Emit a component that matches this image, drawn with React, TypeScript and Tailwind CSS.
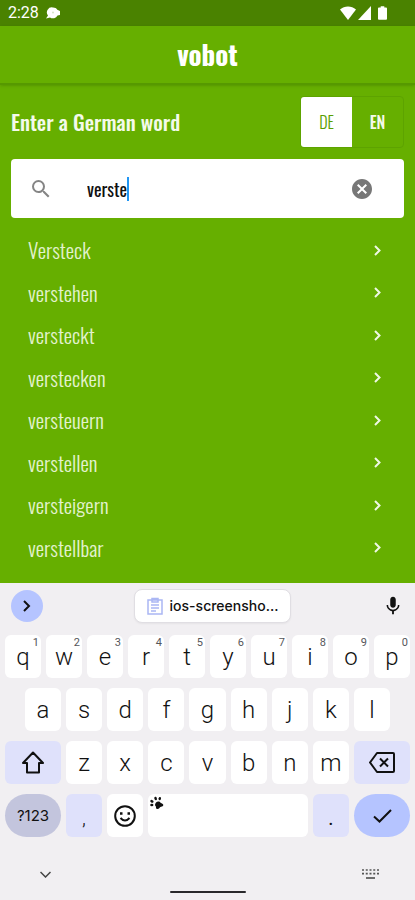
import React, { useState } from "react";
import { clsx } from "clsx";
import { MdCancel, MdMic, MdSearch } from "react-icons/md";

const suggestions = [
  "Versteck",
  "verstehen",
  "versteckt",
  "verstecken",
  "versteuern",
  "verstellen",
  "versteigern",
  "verstellbar",
];

const topRow = ["q", "w", "e", "r", "t", "y", "u", "i", "o", "p"];
const middleRow = ["a", "s", "d", "f", "g", "h", "j", "k", "l"];
const bottomRow = ["z", "x", "c", "v", "b", "n", "m"];

const narrow = "font-['Oswald','Liberation_Sans_Narrow','Roboto_Condensed',sans-serif]";

function StatusBar() {
  return (
    <div className="flex h-[26px] items-center justify-between bg-[#4a8200] pl-2 pr-7 text-white">
      <div className="flex items-center gap-[6px]">
        <span className="text-base">2:28</span>
        <svg className="h-3 w-4" viewBox="0 0 16 12" fill="currentColor">
          <path d="M1 11.500 3 8.500A5 5 0 0 1 8 .5c2 0 3.500.8 4.300 2.300L15 4v4l-2.500.5A5.200 5.200 0 0 1 5 10.500Z" />
          <circle cx="8" cy="5.500" r="1" fill="#d5e2c6" />
        </svg>
      </div>
      <div className="flex items-center">
        <svg className="h-[14px] w-4" viewBox="0 0 16 14" fill="currentColor">
          <path d="M0 3.600C4.500-.4 11.500-.4 16 3.600L8 14Z" />
        </svg>
        <svg className="ml-0.5 h-[14px] w-[13px]" viewBox="0 0 13 14" fill="currentColor">
          <path d="M13 0v14H0Z" />
        </svg>
        <svg className="ml-[7px] h-[14px] w-[9px]" viewBox="0 0 10 15" fill="currentColor">
          <path d="M3 0h4v1.500h2q1 0 1 1V14q0 1-1 1H1q-1 0-1-1V2.500q0-1 1-1h2Z" />
        </svg>
      </div>
    </div>
  );
}

function Key({
  label,
  hint,
  className,
  children,
}: {
  label: string;
  hint?: string;
  className?: string;
  children?: React.ReactNode;
}) {
  return (
    <button
      type="button"
      aria-label={label}
      className={clsx(
        "relative flex h-[43px] items-center justify-center text-2xl font-light text-[#111]",
        className ?? "min-w-0 flex-1 rounded-md bg-white"
      )}
    >
      {children ?? label}
      {hint && (
        <span className="absolute right-0.5 top-0.5 text-[11px] font-normal leading-3 text-[#55565a]">{hint}</span>
      )}
    </button>
  );
}

function Keyboard() {
  return (
    <div className="bg-[#f1eff2] font-['Roboto',sans-serif] text-[#111]">
      <div className="flex items-center justify-between px-[11px] pb-3 pt-[6px]">
        <button
          type="button"
          aria-label="Expand toolbar"
          className="flex size-8 items-center justify-center rounded-full bg-[#b5c4ff]"
        >
          <svg className="h-3 w-2" viewBox="0 0 8 12" fill="none" stroke="currentColor" strokeWidth="2">
            <path d="m1 1 5 5-5 5" />
          </svg>
        </button>
        <button
          type="button"
          className="flex h-[34px] items-center gap-[7px] rounded-lg border border-[#e0dee3] bg-white px-3 font-['Inter',sans-serif] text-sm font-medium shadow-xs"
        >
          <svg className="h-[18px] w-4" viewBox="0 0 16 18" fill="none" stroke="#abb7f4" strokeWidth="1.500">
            <path d="M1 3h14v14H1ZM5 3V1.500h6V5H5V3M4 8h8M4 11h8M4 14h5" />
          </svg>
          ios-screensho...
        </button>
        <button type="button" aria-label="Voice input">
          <MdMic className="size-[22px]" />
        </button>
      </div>

      <div className="flex flex-col gap-[10px] px-[5px]">
        <div className="flex gap-[5px]">
          {topRow.map((letter, i) => (
            <Key key={letter} label={letter} hint={String((i + 1) % 10)} />
          ))}
        </div>
        <div className="flex gap-[5px] px-5">
          {middleRow.map((letter) => (
            <Key key={letter} label={letter} />
          ))}
        </div>
        <div className="flex gap-[5px]">
          <Key label="Shift" className="w-14 rounded-md bg-[#dfe1fb]">
            <svg className="h-[23px] w-6" viewBox="0 0 24 23" fill="none" stroke="currentColor" strokeWidth="2">
              <path d="M12 1.500 22 12h-4v9.500H6V12H2Z" strokeLinejoin="round" />
            </svg>
          </Key>
          {bottomRow.map((letter) => (
            <Key key={letter} label={letter} />
          ))}
          <Key label="Backspace" className="w-14 rounded-md bg-[#dfe1fb]">
            <svg className="h-[21px] w-[26px]" viewBox="0 0 26 21" fill="none" stroke="currentColor" strokeWidth="2">
              <path d="M8 1h16q1 0 1 1v17q0 1-1 1H8L1 10.500ZM11 6.500l8 8M19 6.500l-8 8" strokeLinejoin="round" />
            </svg>
          </Key>
        </div>
        <div className="flex gap-[5px]">
          <Key label="?123" className="w-14 rounded-full bg-[#c3c5dd]">
            <span className="font-['Inter',sans-serif] text-[15px] font-normal">?123</span>
          </Key>
          <Key label="," className="w-9 rounded-md bg-[#dfe1fb]">
            <span className="pt-1 text-xl">,</span>
          </Key>
          <Key label="Emoji" className="w-9 rounded-md bg-white">
            <svg className="size-[22px]" viewBox="0 0 22 22" fill="none" stroke="currentColor" strokeWidth="2">
              <circle cx="11" cy="11" r="9.800" />
              <path d="M6.500 13q4.500 5 9 0" />
              <path d="M6 8.500h2.500M13.500 8.500H16" strokeWidth="2.400" />
            </svg>
          </Key>
          <Key label="Space" className="min-w-0 flex-1 rounded-md bg-white">
            <svg className="absolute left-0.5 top-0.5 size-[14px]" viewBox="0 0 14 14" fill="#111">
              <path d="M5 9c0-2 2-4 4-3.500 1 .3 1.500 1.500 3 2 1.800.5 1.800 2.800 0 3-1.500.2-1.700.5-2.500 1.500C8 14 5.500 13 6 11 6 10.200 5 10 5 9Z" />
              <ellipse cx="1.800" cy="9" rx="1.600" ry="1.200" />
              <ellipse cx="1.900" cy="5.300" rx="1.700" ry="1.300" transform="rotate(30 1.900 5.300)" />
              <ellipse cx="5.600" cy="2.500" rx="1.300" ry="1.800" transform="rotate(-15 5.600 2.500)" />
              <ellipse cx="9.800" cy="2.600" rx="1.200" ry="1.700" transform="rotate(15 9.800 2.600)" />
            </svg>
          </Key>
          <Key label="." className="w-9 rounded-md bg-[#dfe1fb]">
            <span className="pt-1 text-xl font-normal">.</span>
          </Key>
          <Key label="Done" className="w-14 rounded-full bg-[#b5c4ff]">
            <svg className="h-[14px] w-[19px]" viewBox="0 0 19 14" fill="none" stroke="currentColor" strokeWidth="2">
              <path d="m1 7.500 5.500 5L18 1" />
            </svg>
          </Key>
        </div>
      </div>

      <div className="flex h-[63px] flex-col justify-between pb-[7px] pt-8">
        <div className="flex items-center justify-between px-9">
          <button type="button" aria-label="Hide keyboard" className="ml-1">
            <svg className="h-[7px] w-[11px]" viewBox="0 0 11 7" fill="none" stroke="#444" strokeWidth="1.500">
              <path d="m.5 1 5 5 5-5" />
            </svg>
          </button>
          <button type="button" aria-label="Switch keyboard">
            <svg className="h-[10px] w-[17px]" viewBox="0 0 17 10" fill="none" stroke="#555" strokeWidth="1.700">
              <path d="M0 1h17M0 4.700h17" strokeDasharray="2 1.750" />
              <path d="M4 9h9" />
            </svg>
          </button>
        </div>
        <div className="mx-auto h-0.5 w-[76px] rounded-full bg-[#29282b]" />
      </div>
    </div>
  );
}

export default function App() {
  const [query, setQuery] = useState("verste");
  const [language, setLanguage] = useState("DE");

  return (
    <div className="flex min-h-screen flex-col bg-[#66af00] font-['Roboto',sans-serif]">
      <StatusBar />
      <header className="flex h-[59px] items-center justify-center border-b-2 border-[#569900] shadow-sm">
        <h1 className={clsx(narrow, "text-[27px] font-bold text-white")}>vobot</h1>
      </header>

      <main className={clsx(narrow, "flex flex-1 flex-col px-[11px] pb-[14px] pt-[11px]")}>
        <div className="flex items-center justify-between">
          <label htmlFor="word" className="text-[21px] font-medium text-[#f4faea]">
            Enter a German word
          </label>
          <div className="flex overflow-hidden rounded border border-[#5da300]">
            {["DE", "EN"].map((code) => (
              <button
                key={code}
                type="button"
                aria-pressed={language === code}
                onClick={() => setLanguage(code)}
                className={clsx(
                  "h-[50px] w-[51px] text-base",
                  language === code ? "bg-white font-light text-[#5a9e00]" : "font-medium text-[#f4faea]"
                )}
              >
                {code}
              </button>
            ))}
          </div>
        </div>

        <div className="mt-[11px] flex h-[59px] items-center rounded bg-white pl-[18px] pr-[30px]">
          <MdSearch className="size-6 text-[#858585]" />
          <div className="ml-[34px] flex min-w-0 flex-1 items-center">
            <input
              id="word"
              type="text"
              value={query}
              onChange={(e) => setQuery(e.target.value)}
              className="min-w-0 field-sizing-content text-lg text-[#111] caret-transparent outline-none"
            />
            <span className="h-6 w-0.5 bg-[#2196f3]" />
          </div>
          <button type="button" aria-label="Clear" onClick={() => setQuery("")}>
            <MdCancel className="size-6 text-[#777]" />
          </button>
        </div>

        <ul className="mt-[11px] flex flex-1 flex-col">
          {suggestions.map((word) => (
            <li key={word} className="flex flex-1">
              <button
                type="button"
                className="flex flex-1 items-center justify-between pl-[17px] pr-[23px] text-[21px] leading-8 font-light text-[#e2f2ce]"
              >
                {word}
                <svg className="h-[11px] w-[7px]" viewBox="0 0 7 11" fill="none" stroke="#eff8e4" strokeWidth="2">
                  <path d="m1 1 4.500 4.500L1 10" />
                </svg>
              </button>
            </li>
          ))}
        </ul>
      </main>

      <Keyboard />
    </div>
  );
}
